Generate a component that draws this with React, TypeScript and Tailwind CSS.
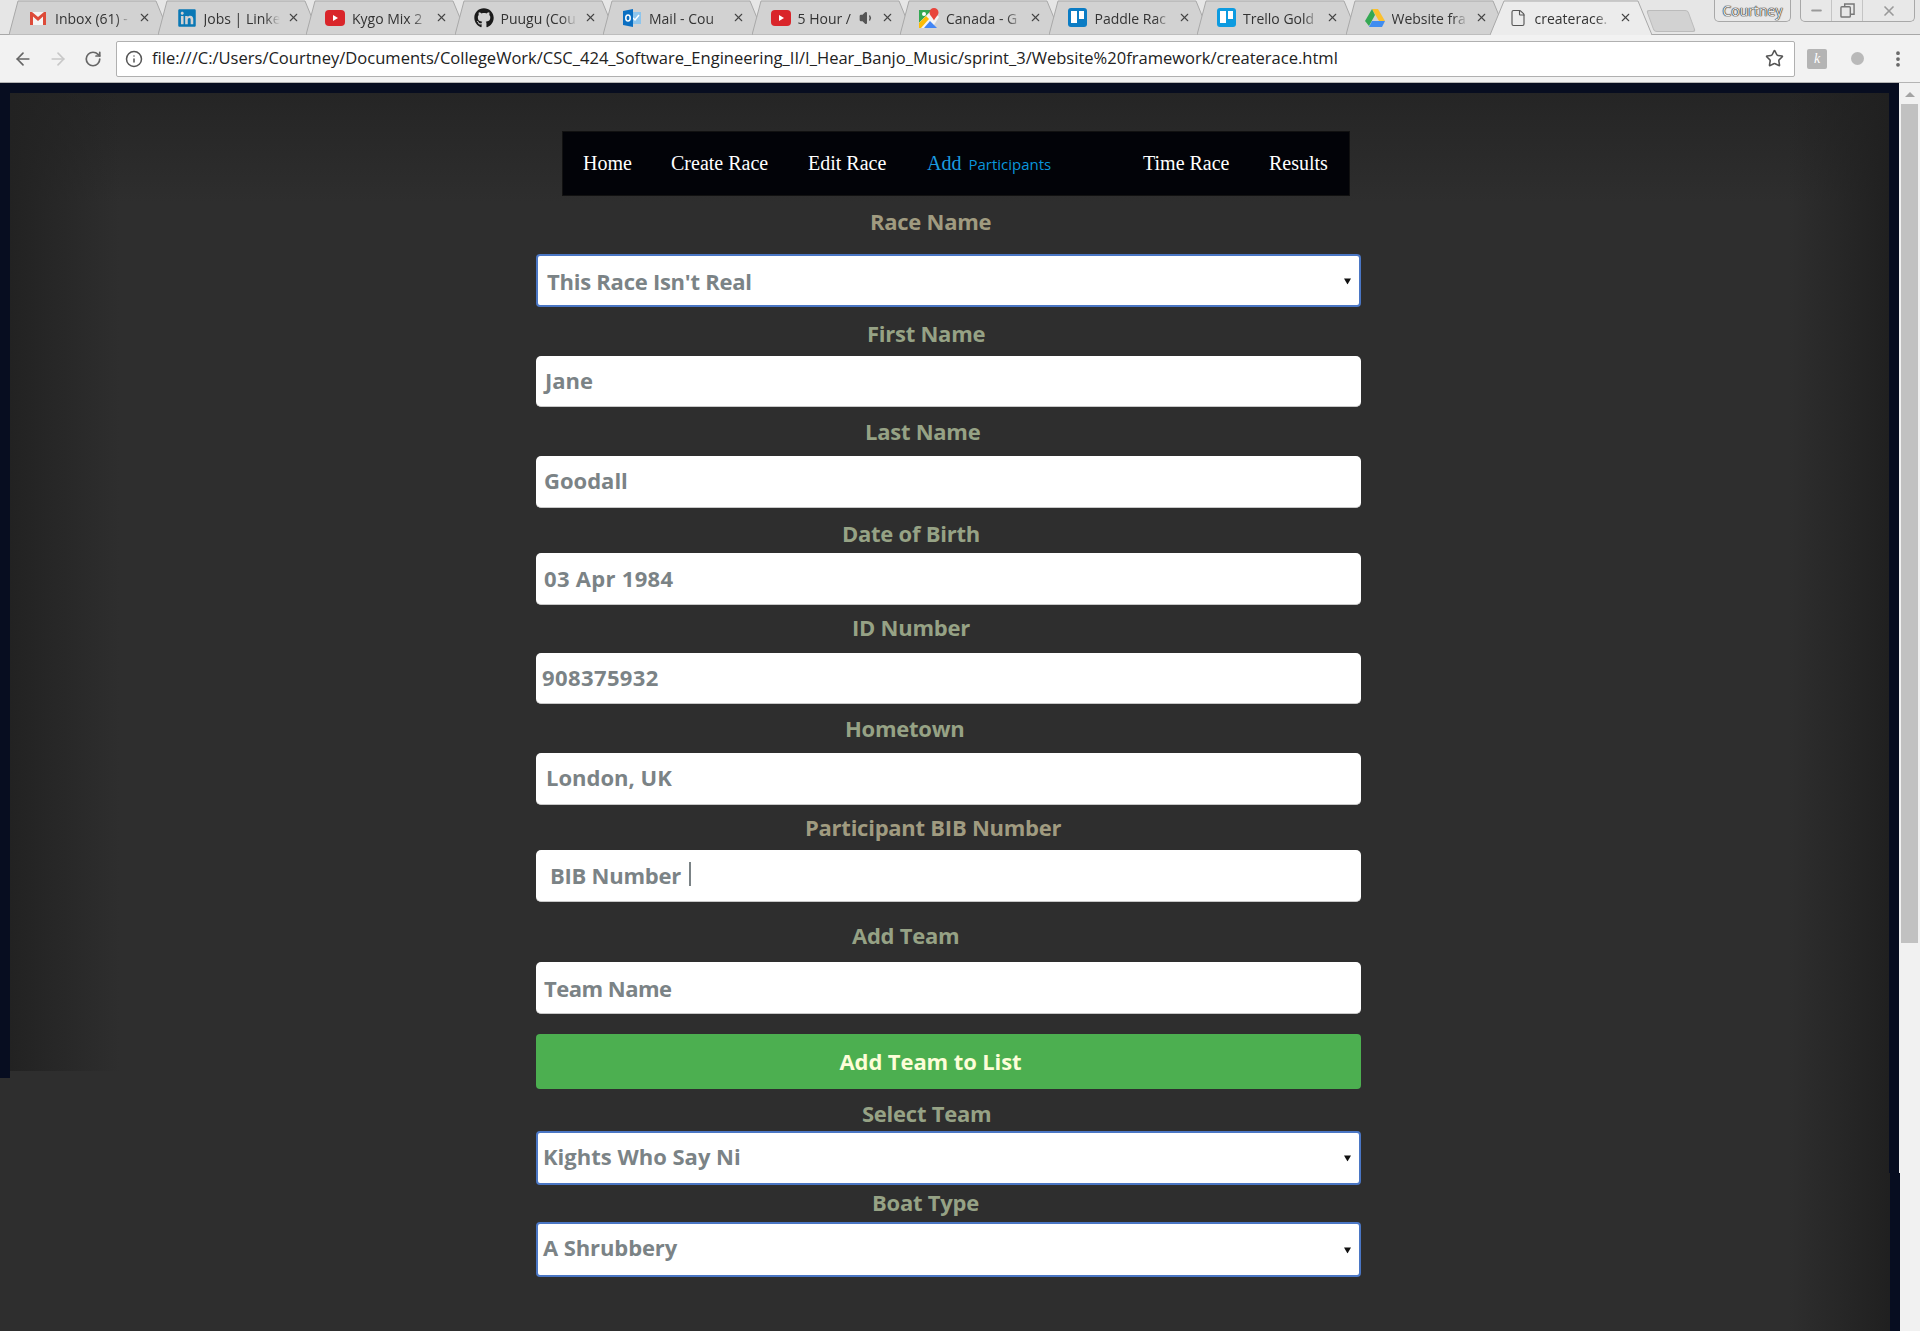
import type { ReactNode } from "react";
import { ArrowLeft, ArrowRight, RotateCw, Info, Star, EllipsisVertical, File, Volume1, X, Minus } from "lucide-react";
import { FaGithub, FaLinkedin } from "react-icons/fa";

const Gmail = () => (
  <svg viewBox="0 0 18 18" className="w-[18px] h-[18px]">
    <rect x="1" y="3" width="16" height="13" fill="#f4f4f4" />
    <path d="M1 16V3h2l6 5 6-5h2v13h-3V7.500L9 12 4 7.500V16z" fill="#dd4b39" />
  </svg>
);

const YouTube = () => (
  <svg viewBox="0 0 20 18" className="w-[20px] h-[18px]">
    <rect x="0" y="1" width="20" height="16" rx="4" fill="#d9252a" />
    <path d="M8 6l5 3-5 3z" fill="#fff" />
  </svg>
);

const Outlook = () => (
  <svg viewBox="0 0 18 18" className="w-[18px] h-[18px]">
    <rect x="7" y="3" width="11" height="12" fill="#8ec5ec" />
    <path d="M10 9l2 2 4-5" stroke="#fff" strokeWidth="1.5" fill="none" />
    <path d="M0 2l10-2v18L0 16z" fill="#0a6fc2" />
    <ellipse cx="5" cy="9" rx="2.2" ry="3" fill="none" stroke="#fff" strokeWidth="1.5" />
  </svg>
);

const Maps = () => (
  <svg viewBox="0 0 20 20" className="w-[20px] h-[20px]">
    <path d="M0 2h13L0 15z" fill="#34a853" />
    <path d="M0 15L13 2l7 7-7 11H0z" fill="#f4f4f4" />
    <path d="M0 15l7-7 3 3-8 9H0z" fill="#fbbc05" />
    <path d="M5 20l6-7 7 7z" fill="#4285f4" />
    <circle cx="5" cy="6" r="2" fill="#fff" />
    <path d="M15 0a4.500 4.500 0 0 1 4.500 4.500c0 3-3 4.500-4.500 8-1.500-3.500-4.500-5-4.500-8A4.500 4.500 0 0 1 15 0z" fill="#e8453c" />
  </svg>
);

const Trello = ({ className }: { className: string }) => (
  <div className={`flex gap-[2px] w-[19px] h-[19px] rounded-[3px] p-[3px] ${className}`}>
    <div className="w-[6px] h-[12px] bg-white" />
    <div className="w-[5px] h-[8px] bg-white" />
  </div>
);

const Drive = () => (
  <svg viewBox="0 0 20 18" className="w-[20px] h-[18px]">
    <path d="M7 0h6l7 12h-6z" fill="#fbc02d" />
    <path d="M7 0l3 6-6 11-4-5z" fill="#34a853" />
    <path d="M7 12h13l-3 6H4z" fill="#3f8cf0" />
  </svg>
);

type TabProps = { icon: ReactNode; label: string; audio?: boolean; active?: boolean; first?: boolean };

const Tab = ({ icon, label, audio, active, first }: TabProps) => {
  return (
    <div
      className={`relative flex items-center h-[35px] w-[162px] shrink-0 ${first ? "ml-[9px]" : active ? "-ml-[18px]" : "-ml-[13.5px]"} ${active ? "z-10" : ""}`}
    >
      <svg viewBox="0 0 162 35" className="absolute inset-0 w-[162px] h-[35px]">
        {active ? (
          <path d="M0 35L14 1h134l14 34" fill="#ececec" stroke="#a8a8a8" />
        ) : (
          <path d="M0 35L9 1h138l14 34z" fill="#d2d2d2" stroke="#a8a8a8" />
        )}
      </svg>
      <div className={`relative flex items-center justify-center w-[20px] h-[20px] ${active ? "ml-[18px]" : "ml-[19px]"}`}>{icon}</div>
      <div className="relative ml-[7px] mt-[2px] w-[76px] overflow-hidden whitespace-nowrap text-[14px] text-[#333] font-['Open_Sans',sans-serif] [mask-image:linear-gradient(to_right,black_80%,transparent)]">
        {label}
      </div>
      {audio && <Volume1 size={16} className="absolute left-[107px] top-[10px] text-[#555] fill-[#555]" />}
      <X size={13} strokeWidth={2} className="absolute left-[129px] top-[11px] text-[#444]" />
    </div>
  );
};

const NavLink = ({ children, className }: { children: ReactNode; className: string }) => (
  <a className={`text-[20px] text-white font-['Liberation_Serif',serif] ${className}`}>{children}</a>
);

const Label = ({ text, className }: { text: string; className: string }) => (
  <div className={`font-['Open_Sans',sans-serif] font-bold text-[22px] leading-[30px] tracking-[-0.25px] ${className}`}>{text}</div>
);

const Box = ({ children, className }: { children: ReactNode; className: string }) => (
  <div className={`flex items-center bg-white rounded-[5px] border-b border-[#c8c8c8] font-['Open_Sans',sans-serif] font-bold text-[22px] text-[#7b8386] ${className}`}>
    {children}
  </div>
);

const SelectBox = ({ children, className }: { children: ReactNode; className: string }) => (
  <div className={`relative flex items-center bg-white rounded-[4px] border-2 border-[#4a76c4] font-['Open_Sans',sans-serif] font-bold text-[22px] text-[#7b8386] ${className}`}>
    {children}
    <svg viewBox="0 0 8 8" className="absolute right-[8px] top-1/2 -translate-y-1/2 w-[7px] h-[7px]">
      <path d="M0 1h8L4 8z" fill="#111" />
    </svg>
  </div>
);

export default function App() {
  return (
    <div className="w-[1920px] h-[1331px] overflow-hidden flex flex-col bg-[#2e2e2e]">
      {/* browser tab strip */}
      <div className="flex items-start h-[35px] bg-[#e6e6e6] border-b border-[#a8a8a8]">
        <Tab first icon={<Gmail />} label="Inbox (61) -" />
        <Tab icon={<FaLinkedin size={20} color="#0a78b5" />} label="Jobs | Linke" />
        <Tab icon={<YouTube />} label="Kygo Mix 2" />
        <Tab icon={<FaGithub size={20} color="#1a1a1a" />} label="Puugu (Cou" />
        <Tab icon={<Outlook />} label="Mail - Cou" />
        <Tab icon={<YouTube />} label="5 Hour /" audio />
        <Tab icon={<Maps />} label="Canada - G" />
        <Tab icon={<Trello className="bg-[#0b7cc4]" />} label="Paddle Rac" />
        <Tab icon={<Trello className="bg-[#0d9be0]" />} label="Trello Gold" />
        <Tab icon={<Drive />} label="Website fra" />
        <Tab active icon={<File size={18} strokeWidth={1.5} className="text-[#555]" />} label="createrace." />
        <div className="ml-[-2px] mt-[10px] w-[42px] h-[22px] bg-[#d2d2d2] border border-[#bbb] rounded-[3px] skew-x-[20deg]" />
        <div className="flex-1" />
        <div className="flex items-center justify-center w-[77px] h-[22px] bg-[#e8e8e8] border border-t-0 border-[#a8a8a8] rounded-b-[5px] text-[14px] text-[#e8e8e8] font-['Open_Sans',sans-serif] [text-shadow:0_0_1px_#222,0_0_1px_#222,0_0_1px_#222]">
          Courtney
        </div>
        <div className="flex ml-[9px] mr-[5px] w-[115px] h-[22px] border border-t-0 border-[#a8a8a8] rounded-b-[5px] bg-[#e8e8e8]">
          <div className="flex items-center justify-center w-[31px] border-r border-[#c4c4c4]">
            <Minus size={15} strokeWidth={3} className="text-[#999]" />
          </div>
          <div className="flex items-center justify-center w-[31px] border-r border-[#c4c4c4]">
            <svg viewBox="0 0 16 16" className="w-[15px] h-[15px]" fill="none" stroke="#777" strokeWidth="1.5">
              <rect x="1" y="4" width="10" height="11" rx="1" />
              <path d="M5 4V1h10v11h-4" />
            </svg>
          </div>
          <div className="flex items-center justify-center flex-1">
            <X size={16} strokeWidth={2.5} className="text-[#999]" />
          </div>
        </div>
      </div>

      {/* browser toolbar */}
      <div className="flex items-center h-[48px] bg-[#f2f2f2] border-b border-[#b4b4b4]">
        <ArrowLeft size={20} strokeWidth={2} className="ml-[13px] text-[#666]" />
        <ArrowRight size={20} strokeWidth={2} className="ml-[15px] text-[#c8c8c8]" />
        <RotateCw size={18} strokeWidth={2.25} className="ml-[16px] text-[#666]" />
        <div className="flex items-center ml-[14px] w-[1679px] h-[36px] bg-white border border-[#b0b0b0] rounded-[2px]">
          <Info size={18} strokeWidth={2} className="ml-[8px] text-[#555]" />
          <div className="ml-[9px] flex-1 text-[16.55px] text-[#222] font-['Open_Sans',sans-serif] whitespace-nowrap">
            file:///C:/Users/Courtney/Documents/CollegeWork/CSC_424_Software_Engineering_II/I_Hear_Banjo_Music/sprint_3/Website%20framework/createrace.html
          </div>
          <Star size={19} strokeWidth={2} className="mr-[10px] text-[#555]" />
        </div>
        <div className="flex items-center justify-center ml-[12px] w-[20px] h-[20px] bg-[#b4b4b4] rounded-[2px] text-white italic text-[14px] font-['Liberation_Serif',serif]">
          k
        </div>
        <div className="ml-[24px] w-[13px] h-[13px] rounded-full bg-[#b9b9b9]" />
        <EllipsisVertical size={20} strokeWidth={2.5} className="ml-[24px] text-[#666]" />
      </div>

      {/* page plus scrollbar */}
      <div className="flex flex-1 min-h-0">
        <div className="flex flex-col w-[1900px] bg-[#f1f1f1]">
          <div className="h-[10px] bg-[#070d20] mr-[1px]" />
          <div className="flex flex-1 min-h-0">
            <div className="w-[10px] bg-[#2e2e2e]">
              <div className="h-[985px] bg-[#070d20]" />
            </div>

            {/* form column, edges darkened like an inset shadow */}
            <div className="flex-1 bg-[#2e2e2e] bg-no-repeat bg-[linear-gradient(to_right,#222222,transparent),linear-gradient(to_left,#202020,transparent),linear-gradient(to_bottom,#252525,transparent)] bg-[size:110px_978px,100px_100%,100%_110px] bg-[position:left_top,right_top,left_top]">
              <div className="ml-[526px] w-[825px]">
                <nav className="flex items-center ml-[26px] mt-[38px] w-[788px] h-[65px] pl-[20px] pb-[2px] bg-[#020308] border border-[#111]">
                  <NavLink className="w-[88px]">Home</NavLink>
                  <NavLink className="w-[137px]">Create Race</NavLink>
                  <NavLink className="w-[119px]">Edit Race</NavLink>
                  <a className="flex items-baseline w-[216px]">
                    <span className="text-[20px] text-[#1b9be0] font-['Liberation_Serif',serif]">Add</span>
                    <span className="ml-[7px] text-[15px] text-[#0a95dc] font-['Open_Sans',sans-serif]">Participants</span>
                  </a>
                  <NavLink className="w-[126px]">Time Race</NavLink>
                  <NavLink className="">Results</NavLink>
                </nav>

                <Label text="Race Name" className="mt-[10px] mb-[18px] ml-[334px] text-[#a09b80]" />
                <SelectBox className="h-[53px] pl-[9px] pt-[2px] tracking-[-0.25px]">This Race Isn't Real</SelectBox>

                <Label text="First Name" className="mt-[11px] mb-[8px] ml-[331px] text-[#96a285]" />
                <Box className="h-[51px] pl-[9px] pb-[2px]">Jane</Box>

                <Label text="Last Name" className="mt-[9px] mb-[10px] ml-[329px] text-[#96a285]" />
                <Box className="h-[52px] pl-[8px] pb-[3px]">Goodall</Box>

                <Label text="Date of Birth" className="mt-[10px] mb-[5px] ml-[306px] text-[#96a285]" />
                <Box className="h-[52px] pl-[8px] tracking-[0.3px]">03 Apr 1984</Box>

                <Label text="ID Number" className="mt-[7px] mb-[11px] ml-[316px] text-[#96a285]" />
                <Box className="h-[51px] pl-[6px] pb-[2px] tracking-[0.4px]">908375932</Box>

                <Label text="Hometown" className="mt-[9px] mb-[10px] ml-[309px] text-[#96a285]" />
                <Box className="h-[52px] pl-[10px] pb-[2px]">London, UK</Box>

                <Label text="Participant BIB Number" className="mt-[7px] mb-[8px] ml-[269px] text-[#a09b80]" />
                <Box className="h-[52px] pl-[14px] tracking-[-0.25px]">
                  BIB Number
                  <div className="ml-[8px] mb-[4px] w-[2px] h-[24px] bg-[#7b8386]" />
                </Box>

                <Label text="Add Team" className="mt-[18px] mb-[12px] ml-[316px] text-[#96a285]" />
                <Box className="h-[52px] pl-[8px] pt-[2px] tracking-[-0.5px]">Team Name</Box>

                <button className="mt-[20px] w-full h-[55px] pr-[36px] bg-[#4caf50] rounded-[4px] text-[#fdfdd8] font-['Open_Sans',sans-serif] font-bold text-[22px] tracking-[-0.1px]">
                  Add Team to List
                </button>

                <Label text="Select Team" className="mt-[9px] mb-[3px] ml-[326px] text-[#96a285]" />
                <SelectBox className="h-[54px] pl-[5px] pb-[3px]">Kights Who Say Ni</SelectBox>

                <Label text="Boat Type" className="mt-[2px] mb-[5px] ml-[336px] text-[#96a285]" />
                <SelectBox className="h-[55px] pl-[5px] pb-[4px] tracking-[-0.1px]">A Shrubbery</SelectBox>
              </div>
            </div>

            <div className="w-[11px]">
              <div className="w-[10px] h-[1080px] bg-[#070d20]" />
              <div className="h-[158px] bg-[#070d20] border-l border-[#202020]" />
            </div>
          </div>
        </div>

        {/* scrollbar */}
        <div className="flex flex-col items-start w-[20px] pl-[1px] bg-[#f1f1f1]">
          <div className="mt-[9px] ml-[4px] w-0 h-0 border-x-[5px] border-x-transparent border-b-[5px] border-b-[#a3a3a3]" />
          <div className="mt-[7px] w-[17px] h-[839px] bg-[#c1c1c1]" />
        </div>
      </div>
    </div>
  );
}
